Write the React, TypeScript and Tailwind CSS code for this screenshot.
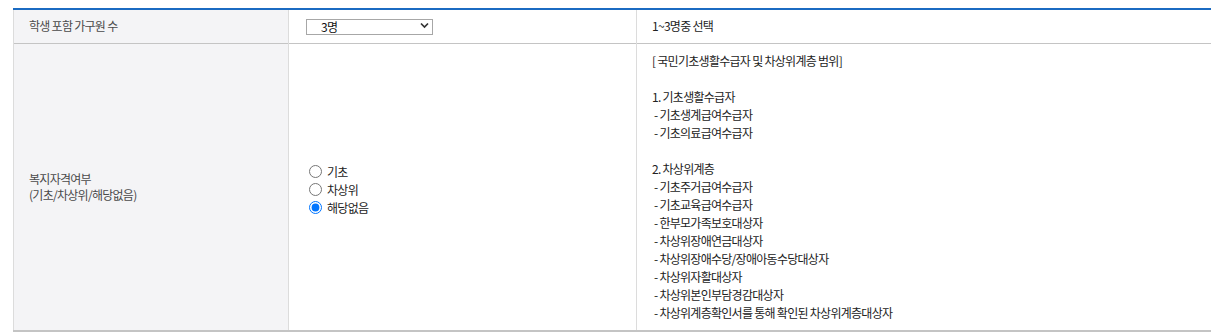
import React from "react";

const lines: string[] = [
  "[ 국민기초생활수급자 및 차상위계층 범위]",
  "",
  "1. 기초생활수급자",
  " - 기초생계급여수급자",
  " - 기초의료급여수급자",
  "",
  "2. 차상위계층",
  " - 기초주거급여수급자",
  " - 기초교육급여수급자",
  " - 한부모가족보호대상자",
  " - 차상위장애연금대상자",
  " - 차상위장애수당/장애아동수당대상자",
  " - 차상위자활대상자",
  " - 차상위본인부담경감대상자",
  " - 차상위계층확인서를 통해 확인된 차상위계층대상자",
];

export default function App() {
  const font = { fontFamily: '"Noto Sans CJK KR", "Noto Sans", sans-serif' };
  return (
    <div className="w-[1224px] h-[332px] bg-white pt-[8px] px-[13px]" style={font}>
      <table className="w-full border-collapse border-t-2 border-t-[#1b6bc2] text-[12px] tracking-[-0.06em]">
        <colgroup>
          <col className="w-[275px]" />
          <col className="w-[348px]" />
          <col />
        </colgroup>
        <tbody>
          <tr className="h-[34px] border-b border-b-[#c4c4c4]">
            <th className="bg-[#f4f4f6] text-left font-normal text-[#4a4a4a] pl-[15px] border-l border-l-[#dcdcdc] border-r border-r-[#dcdcdc]">
              학생 포함 가구원 수
            </th>
            <td className="pl-[17px] border-r border-r-[#dcdcdc]">
              <div className="relative w-[127px] h-[16px]">
                <select
                  defaultValue="3"
                  className="appearance-none w-full h-full border border-[#a7a7a7] bg-white pl-[14px] text-[12px] leading-[14px] text-[#111] outline-none tracking-[-0.06em]"
                  style={font}
                >
                  <option value="1">1명</option>
                  <option value="2">2명</option>
                  <option value="3">3명</option>
                </select>
                <svg
                  className="pointer-events-none absolute right-[4px] top-[4px]"
                  width="9"
                  height="7"
                  viewBox="0 0 9 7"
                >
                  <path d="M1 1.5 L4.5 5 L8 1.5" fill="none" stroke="#333" strokeWidth="1.7" />
                </svg>
              </div>
            </td>
            <td className="pl-[15px] text-[#222]">1~3명중 선택</td>
          </tr>
          <tr className="border-b-2 border-b-[#c4c4c4]">
            <th className="bg-[#f4f4f6] text-left font-normal text-[#4a4a4a] pl-[15px] leading-[16px] border-l border-l-[#dcdcdc] border-r border-r-[#dcdcdc]">
              복지자격여부
              <br />
              (기초/차상위/해당없음)
            </th>
            <td className="pl-[16px] border-r border-r-[#dcdcdc]">
              <div className="flex flex-col gap-[4px] text-[#222] pt-[6px]">
                {["기초", "차상위", "해당없음"].map((l, i) => (
                  <label key={l} className="flex items-center h-[14px]">
                    <input
                      type="radio"
                      name="w"
                      defaultChecked={i === 2}
                      className="w-[13px] h-[13px] ml-[4px] mr-[5px] m-0"
                    />
                    <span>{l}</span>
                  </label>
                ))}
              </div>
            </td>
            <td className="pl-[15px] pt-[8px] pb-[8px] text-[#222] leading-[18px] align-top">
              {lines.map((l, i) => (
                <div key={i} className="h-[18px] whitespace-pre">
                  {l}
                </div>
              ))}
            </td>
          </tr>
        </tbody>
      </table>
    </div>
  );
}
